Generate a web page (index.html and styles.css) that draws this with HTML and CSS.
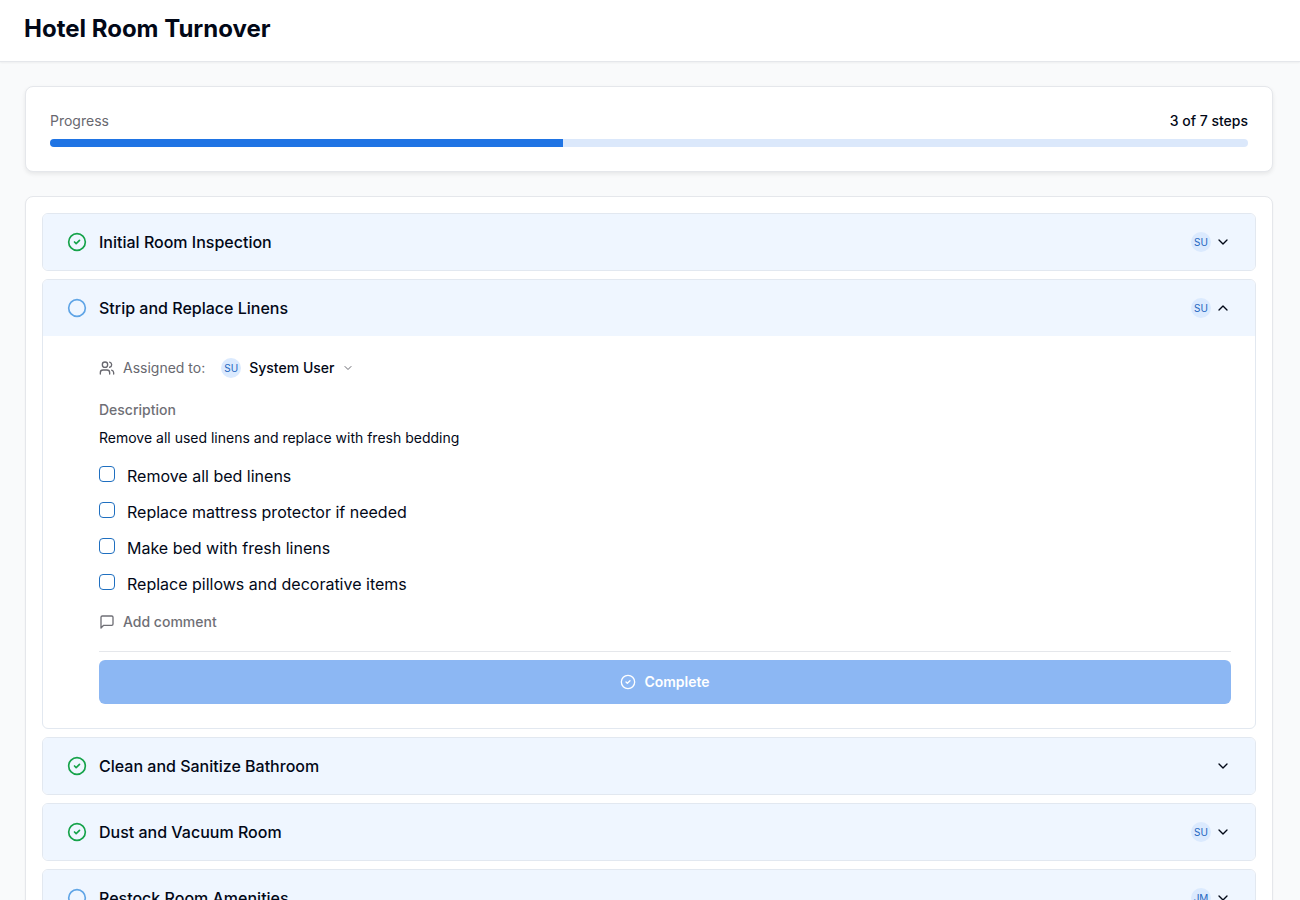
FILE: index.html
```html
<!DOCTYPE html>
<html lang="en">
  <head>
    <meta charset="UTF-8" />
    <meta name="viewport" content="width=device-width, initial-scale=1.0" />
    <title>Hotel Room Turnover</title>
    <link rel="stylesheet" href="styles.css">
  </head>
  <body>
    <!-- Icons shared by the steps -->
    <svg class="sprite" aria-hidden="true">
      <symbol id="icon-check" viewBox="0 0 24 24">
        <circle cx="12" cy="12" r="10" />
        <path d="m9 12 2 2 4-4" />
      </symbol>
      <symbol id="icon-circle" viewBox="0 0 24 24">
        <circle cx="12" cy="12" r="10" />
      </symbol>
      <symbol id="icon-down" viewBox="0 0 24 24">
        <path d="m6 9 6 6 6-6" />
      </symbol>
      <symbol id="icon-up" viewBox="0 0 24 24">
        <path d="m18 15-6-6-6 6" />
      </symbol>
      <symbol id="icon-users" viewBox="0 0 24 24">
        <path d="M16 21v-2a4 4 0 0 0-4-4H6a4 4 0 0 0-4 4v2" />
        <circle cx="9" cy="7" r="4" />
        <path d="M22 21v-2a4 4 0 0 0-3-3.870" />
        <path d="M16 3.130a4 4 0 0 1 0 7.750" />
      </symbol>
      <symbol id="icon-comment" viewBox="0 0 24 24">
        <path d="M21 15a2 2 0 0 1-2 2H7l-4 4V5a2 2 0 0 1 2-2h14a2 2 0 0 1 2 2z" />
      </symbol>
    </svg>

    <!-- Header -->
    <header class="page-header">
      <h1>Hotel Room Turnover</h1>
    </header>

    <main class="content">
      <!-- Progress -->
      <section class="card progress-card">
        <div class="progress-info">
          <span class="muted" id="progress-label">Progress</span>
          <span class="progress-count">3 of 7 steps</span>
        </div>
        <div class="progress-bar" role="progressbar" aria-labelledby="progress-label" aria-valuemin="0" aria-valuemax="7" aria-valuenow="3">
          <div class="progress-fill" style="width: 42.86%"></div>
        </div>
      </section>

      <!-- Steps -->
      <section class="card step-list">
        <article class="step">
          <button class="step-header" type="button" aria-expanded="false">
            <svg class="icon status done"><use href="#icon-check" /></svg>
            <span class="step-title">Initial Room Inspection</span>
            <span class="avatar">SU</span>
            <svg class="icon"><use href="#icon-down" /></svg>
          </button>
        </article>

        <article class="step">
          <button class="step-header" type="button" aria-expanded="true">
            <svg class="icon status todo"><use href="#icon-circle" /></svg>
            <span class="step-title">Strip and Replace Linens</span>
            <span class="avatar">SU</span>
            <svg class="icon"><use href="#icon-up" /></svg>
          </button>

          <div class="step-body">
            <div class="assignee">
              <svg class="icon muted"><use href="#icon-users" /></svg>
              <span class="muted">Assigned to:</span>
              <button class="assignee-button" type="button">
                <span class="avatar">SU</span>
                System User
                <svg class="icon small muted"><use href="#icon-down" /></svg>
              </button>
            </div>

            <div class="description">
              <h2>Description</h2>
              <p>Remove all used linens and replace with fresh bedding</p>
            </div>

            <ul class="checklist">
              <li>
                <input type="checkbox" id="task-1">
                <label for="task-1">Remove all bed linens</label>
              </li>
              <li>
                <input type="checkbox" id="task-2">
                <label for="task-2">Replace mattress protector if needed</label>
              </li>
              <li>
                <input type="checkbox" id="task-3">
                <label for="task-3">Make bed with fresh linens</label>
              </li>
              <li>
                <input type="checkbox" id="task-4">
                <label for="task-4">Replace pillows and decorative items</label>
              </li>
            </ul>

            <button class="comment-button" type="button">
              <svg class="icon"><use href="#icon-comment" /></svg>
              Add comment
            </button>

            <div class="step-footer">
              <button class="complete-button" type="button" disabled>
                <svg class="icon"><use href="#icon-check" /></svg>
                Complete
              </button>
            </div>
          </div>
        </article>

        <article class="step">
          <button class="step-header" type="button" aria-expanded="false">
            <svg class="icon status done"><use href="#icon-check" /></svg>
            <span class="step-title">Clean and Sanitize Bathroom</span>
            <svg class="icon"><use href="#icon-down" /></svg>
          </button>
        </article>

        <article class="step">
          <button class="step-header" type="button" aria-expanded="false">
            <svg class="icon status done"><use href="#icon-check" /></svg>
            <span class="step-title">Dust and Vacuum Room</span>
            <span class="avatar">SU</span>
            <svg class="icon"><use href="#icon-down" /></svg>
          </button>
        </article>

        <article class="step">
          <button class="step-header" type="button" aria-expanded="false">
            <svg class="icon status todo"><use href="#icon-circle" /></svg>
            <span class="step-title">Restock Room Amenities</span>
            <span class="avatar">JM</span>
            <svg class="icon"><use href="#icon-down" /></svg>
          </button>
        </article>
      </section>
    </main>
  </body>
</html>
```
FILE: styles.css
```css
/* General styles */
* {
    box-sizing: border-box;
}

body {
    margin: 0;
    font-family: Inter, "Liberation Sans", sans-serif;
    font-size: 14px;
    line-height: 20px;
    color: #020817;
    background: #f9fafb;
}

h1,
h2,
p,
ul {
    margin: 0;
    padding: 0;
}

button {
    padding: 0;
    border: none;
    background: none;
    font: inherit;
    color: inherit;
    cursor: pointer;
}

/* Icons */
.sprite {
    display: none;
}

.icon {
    flex: none;
    width: 16px;
    height: 16px;
    fill: none;
    stroke: currentColor;
    stroke-width: 2;
    stroke-linecap: round;
    stroke-linejoin: round;
}

.icon.small {
    width: 12px;
    height: 12px;
}

.icon.status {
    width: 20px;
    height: 20px;
}

.done {
    color: #16a34a;
}

.todo {
    color: #60a5e6;
}

.muted {
    color: #68686f;
}

/* Header */
.page-header {
    padding: 13px 24px 16px;
    background: #fff;
    border-bottom: 1px solid #e5e7eb;
    box-shadow: 0 1px 2px rgba(0, 0, 0, 0.05);
}

.page-header h1 {
    font-size: 24px;
    font-weight: 700;
    line-height: 32px;
}

/* Cards */
.content {
    display: flex;
    flex-direction: column;
    gap: 24px;
    padding: 24px 27px 24px 25px;
}

.card {
    background: #fff;
    border: 1px solid #e5e7eb;
    border-radius: 8px;
}

/* Progress */
.progress-card {
    padding: 24px;
    box-shadow: 0 2px 4px rgba(0, 0, 0, 0.08);
}

.progress-info {
    display: flex;
    justify-content: space-between;
    margin-bottom: 8px;
}

.progress-count {
    font-weight: 500;
}

.progress-bar {
    height: 8px;
    overflow: hidden;
    background: #dbe8fb;
    border-radius: 4px;
}

.progress-fill {
    height: 100%;
    background: #1f74e4;
}

/* Steps */
.step-list {
    display: flex;
    flex-direction: column;
    gap: 8px;
    padding: 16px;
    box-shadow: 0 1px 2px rgba(0, 0, 0, 0.05);
}

.step {
    overflow: hidden;
    border: 1px solid #e2e8f0;
    border-radius: 6px;
}

.step-header {
    display: flex;
    align-items: center;
    gap: 4px;
    width: 100%;
    padding: 16px 24px;
    background: #eff6ff;
    text-align: left;
}

.step-title {
    flex: 1;
    margin-left: 8px;
    font-size: 16px;
    font-weight: 500;
    line-height: 24px;
}

.avatar {
    display: flex;
    align-items: center;
    justify-content: center;
    width: 20px;
    height: 20px;
    background: #dbeafe;
    border-radius: 50%;
    font-size: 10px;
    font-weight: 400;
    color: #1f66c0;
}

/* Open step */
.step-body {
    padding: 16px 24px 24px 56px;
}

.assignee {
    display: flex;
    align-items: center;
    gap: 8px;
    height: 32px;
    margin-bottom: 16px;
}

.assignee-button {
    display: flex;
    align-items: center;
    gap: 8px;
    height: 32px;
    padding: 0 8px;
    font-weight: 500;
}

.description {
    margin-bottom: 16px;
}

.description h2 {
    margin-bottom: 8px;
    font-size: 14px;
    font-weight: 500;
    color: #6f6f76;
}

/* Checklist */
.checklist {
    display: flex;
    flex-direction: column;
    gap: 12px;
    margin-bottom: 16px;
    list-style: none;
}

.checklist li {
    display: flex;
    gap: 12px;
    font-size: 16px;
    line-height: 24px;
}

.checklist input {
    appearance: none;
    width: 16px;
    height: 16px;
    margin: 2px 0 0;
    border: 1px solid #1f6fc0;
    border-radius: 4px;
}

.comment-button {
    display: flex;
    align-items: center;
    gap: 8px;
    font-weight: 500;
    color: #6f6f76;
}

/* Complete button */
.step-footer {
    margin-top: 19px;
    padding-top: 8px;
    border-top: 1px solid #e5e7eb;
}

.complete-button {
    display: flex;
    align-items: center;
    justify-content: center;
    gap: 8px;
    width: 100%;
    height: 44px;
    background: #8cb7f3;
    border-radius: 6px;
    font-weight: 600;
    color: #fff;
}
```
